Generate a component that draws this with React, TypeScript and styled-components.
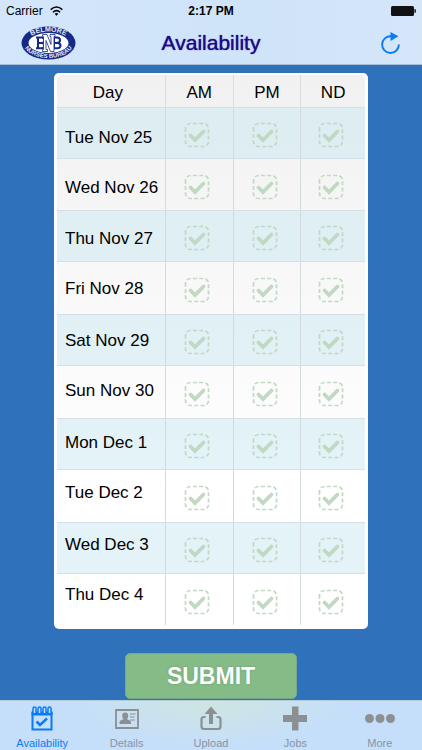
import React, { useState } from "react";
import styled, { createGlobalStyle } from "styled-components";

const GlobalStyle = createGlobalStyle`
  *, *::before, *::after { box-sizing: border-box; }
  body {
    margin: 0;
    background: #2f72bb;
    color: #000;
    font-family: "Liberation Sans", Arial, sans-serif;
  }
`;

const Screen = styled.div`
  display: flex;
  flex-direction: column;
  min-height: 100vh;
`;

const Header = styled.header`
  background: linear-gradient(90deg, #d3e6fb, #cfe3f9 60%, #d5e6f9);
  border-bottom: 1px solid #a5bfdb;
`;

const StatusBar = styled.div`
  display: grid;
  grid-template-columns: 1fr auto 1fr;
  align-items: center;
  height: 22px;
  padding: 0 6px;
  font-size: 12px;
  line-height: 22px;
`;

const Carrier = styled.span`
  display: flex;
  align-items: center;
  gap: 7px;
`;

const Clock = styled.span`
  font-weight: bold;
`;

const Battery = styled.svg`
  justify-self: end;
`;

const NavBar = styled.div`
  display: grid;
  grid-template-columns: 1fr auto 1fr;
  align-items: center;
  height: 42px;
  padding: 0 21px;
`;

const Title = styled.h1`
  margin: 0;
  color: #1d0a87;
  font-size: 21px;
  font-weight: normal;
  line-height: 42px;
  text-shadow: 0 0 1px #1d0a87;
`;

const RefreshButton = styled.button`
  display: flex;
  justify-self: end;
  padding: 0;
  border: 0;
  background: none;
`;

const Main = styled.main`
  display: flex;
  flex: 1;
  flex-direction: column;
  align-items: center;
  gap: 24px;
  padding: 8px 54px 1px;
`;

const Card = styled.section`
  width: 100%;
  padding: 2px 3px 4px;
  border-radius: 5px;
  background: #fff;
`;

const Grid = styled.table`
  width: 100%;
  table-layout: fixed;
  border-spacing: 0;
  border-radius: 5px;
  background: linear-gradient(#f1f1f1, #fff 75%);
`;

const HeadCell = styled.th<{ $width: number }>`
  width: ${(p) => p.$width}%;
  height: 32px;
  padding: 3px 0 0;
  font-size: 17px;
  font-weight: normal;
  line-height: 20px;
  & + & { border-left: 1px solid #d9dddf; }
  &:first-child { padding-right: 6px; }
`;

const DayRow = styled.tr`
  height: 52px;
  &:nth-child(8n + 2) { height: 51px; }
  &:nth-child(odd) > * {
    background: rgba(200, 232, 242, 0.5);
    border-top: 1px solid #d4e0e5;
    border-bottom: 1px solid #d4e0e5;
  }
`;

const DayCell = styled.th<{ $index: number }>`
  padding: ${(p) => 20 - p.$index}px 0 0 8px;
  font-size: 17px;
  font-weight: normal;
  line-height: 20px;
  text-align: left;
  vertical-align: top;
  white-space: nowrap;
`;

const ShiftCell = styled.td`
  padding: 4px 4px 0 0;
  border-left: 1px solid #d2dade;
`;

const Tick = styled.label`
  display: grid;
  justify-content: center;
  cursor: pointer;
  & > * { grid-area: 1 / 1; }
`;

const TickInput = styled.input`
  width: 26px;
  height: 26px;
  margin: 0;
  opacity: 0;
  &:checked + svg { color: #4f9a4d; }
`;

const TickArt = styled.svg`
  color: #c1d9c3;
  pointer-events: none;
`;

const Submit = styled.button`
  width: 55%;
  height: 46px;
  padding: 0;
  border: 1px solid #74a98c;
  border-radius: 5px;
  background: #85bb87;
  color: #fff;
  font-family: inherit;
  font-size: 23px;
  font-weight: bold;
  line-height: 44px;
  text-shadow: 0 0 2px rgba(50, 90, 50, 0.4);
`;

const TabBar = styled.nav`
  position: sticky;
  bottom: 0;
  display: grid;
  grid-template-columns: repeat(5, 1fr);
  height: 50px;
  border-top: 1px solid #b2cdd9;
  background:
    radial-gradient(ellipse 33% 90% at 50% 0, #cfe5e0, rgba(198, 224, 250, 0)),
    #c5dffa;
`;

const Tab = styled.a<{ $active?: boolean }>`
  display: flex;
  flex-direction: column;
  align-items: center;
  padding-top: 3px;
  color: ${(p) => (p.$active ? "#0a7bf7" : "#8d9093")};
  font-size: 11px;
  line-height: 12px;
  text-decoration: none;
`;

const TabIcon = styled.svg`
  margin-bottom: 4px;
`;

const TabLabel = styled.span<{ $active?: boolean }>`
  color: ${(p) => (p.$active ? "#0a7bf7" : "#8794a2")};
`;

const days = [
  "Tue Nov 25", "Wed Nov 26", "Thu Nov 27", "Fri Nov 28", "Sat Nov 29",
  "Sun Nov 30", "Mon Dec 1", "Tue Dec 2", "Wed Dec 3", "Thu Dec 4",
];
const shifts = ["AM", "PM", "ND"];
const columns = [
  { name: "Day", width: 35 },
  { name: "AM", width: 22 },
  { name: "PM", width: 22 },
  { name: "ND", width: 21 },
];

function Logo() {
  return (
    <svg width="55" height="34" viewBox="0 0 55 34" role="img" aria-label="Belmore Nurses Bureau">
      <defs>
        <path id="logo-top" d="M5.5 18 A22 12.500 0 0 1 49.5 18" />
        <path id="logo-bottom" d="M1.5 15 A26 17 0 0 0 53.5 15" />
      </defs>
      <ellipse cx="27.5" cy="17" rx="27" ry="16.5" fill="#142a86" />
      <ellipse cx="27.5" cy="17" rx="20" ry="10" fill="#fff" />
      <g fill="#e6edfb" fontFamily="Liberation Sans, sans-serif" fontWeight="bold">
        <text textAnchor="middle" fontSize="7"><textPath href="#logo-top" startOffset="50%">BELMORE</textPath></text>
        <text textAnchor="middle" fontSize="6"><textPath href="#logo-bottom" startOffset="50%">NURSES BUREAU</textPath></text>
      </g>
      <g fill="none" stroke="#142a86" strokeWidth="2">
        <path d="M15 11.500h5.500q3 0 3 2.700t-3 2.700h-3.500h3.500q3 0 3 2.700t-3 2.700h-5.500M17 11.500v11" />
        <path d="M32 11.500h4q3 0 3 2.700t-3 2.700h-3h3.500q3 0 3 2.700t-3 2.700h-4.500M33 11.500v11" />
      </g>
      <path
        d="M21.500 8.500h4.500l4 10v-8h-1v-2h5v2h-1v15h-3.500l-4.500-11v9h1.500v2h-5v-2h1v-13h-1z"
        fill="#fff" stroke="#142a86" strokeWidth="0.8"
      />
    </svg>
  );
}

function TickMark() {
  return (
    <TickArt width="26" height="26" viewBox="0 0 26 26" fill="none" stroke="currentColor" aria-hidden="true">
      <path
        d="M1.500 9V6.500a5 5 0 0 1 5-5h13a5 5 0 0 1 5 5v13a5 5 0 0 1-5 5h-13a5 5 0 0 1-5-5z"
        strokeWidth="1.700" strokeDasharray="4 2.300"
      />
      <path d="M6.500 13.500l4.500 4.500l8.500-8.500" strokeWidth="3.800" strokeLinecap="round" />
    </TickArt>
  );
}

const tabs = [
  {
    label: "Availability",
    art: (
      <>
        <path d="M5.500 8.500h19v17h-19z" fill="none" stroke="currentColor" strokeWidth="2" />
        <path d="M4.500 8h21v3.500h-21z" />
        <path
          d="M6 9V4.500q0-1.500 1.500-1.500t1.500 1.500V9M11 9V4.500q0-1.500 1.500-1.500t1.500 1.500V9M16 9V4.500q0-1.500 1.500-1.500t1.500 1.500V9M21 9V4.500q0-1.500 1.500-1.500t1.500 1.500V9"
          fill="#c5dffa" stroke="currentColor" strokeWidth="1.500"
        />
        <path d="M9.500 17.500l3.500 3.500l7-6.500" fill="none" stroke="currentColor" strokeWidth="2.500" />
      </>
    ),
  },
  {
    label: "Details",
    art: (
      <>
        <path d="M4 6h22v18H4z" fill="none" stroke="currentColor" strokeWidth="1.800" />
        <path d="M7.500 20v-2q0-1.300 1.500-1.800l2.500-1q-1.300-1.500-1.300-3.500q0-3.200 3-3.200t3 3.200q0 2-1.300 3.500l2.500 1q1.600.5 1.600 1.800v2z" />
        <path d="M18 10h5.500M18 13h4.500M18 16h5" stroke="currentColor" strokeWidth="1.200" />
      </>
    ),
  },
  {
    label: "Upload",
    art: (
      <>
        <path
          d="M9.500 13H8q-2.500 0-2.500 2.500v7q0 2.500 2.500 2.500h14q2.500 0 2.500-2.500v-7q0-2.500-2.500-2.500h-1.500"
          fill="none" stroke="currentColor" strokeWidth="2.200"
        />
        <path d="M15 2.500l6.500 7.500h-4.500v10h-4V10H8.500z" />
      </>
    ),
  },
  { label: "Jobs", art: <path d="M12 2.500h6.500v8.500H27v7h-8.500v8.500H12V18H3v-7h9z" /> },
  {
    label: "More",
    art: (
      <>
        <circle cx="4.500" cy="14.500" r="4.500" />
        <circle cx="15" cy="14.500" r="4.500" />
        <circle cx="25.500" cy="14.500" r="4.500" />
      </>
    ),
  },
];

export default function App() {
  const [picked, setPicked] = useState<Record<string, boolean>>({});

  return (
    <Screen>
      <GlobalStyle />
      <Header>
        <StatusBar>
          <Carrier>
            Carrier
            <svg width="13" height="10" viewBox="0 0 13 10" fill="none" stroke="#000" strokeWidth="1.500" aria-label="Wi-Fi">
              <path d="M.7 3.600Q6.500-1.600 12.300 3.600M2.900 6.200Q6.500 3 10.100 6.200" />
              <path d="M6.500 9.700L4.600 7.700Q6.500 6.300 8.400 7.700z" fill="#000" stroke="none" />
            </svg>
          </Carrier>
          <Clock>2:17 PM</Clock>
          <Battery width="25" height="10" viewBox="0 0 25 10" aria-label="Battery full">
            <rect width="23" height="10" rx="1.500" fill="#111" />
            <path d="M23.500 3h.5q1 0 1 2t-1 2h-.5z" fill="#111" />
          </Battery>
        </StatusBar>
        <NavBar>
          <Logo />
          <Title>Availability</Title>
          <RefreshButton aria-label="Refresh">
            <svg width="21" height="24" viewBox="0 0 21 24" fill="none">
              <path d="M11 5.200A8.400 8.400 0 1 0 18.900 13.500" stroke="#0a7bf7" strokeWidth="1.900" />
              <path d="M10.500 1l8 4.200l-8 4.800z" fill="#0a7bf7" />
            </svg>
          </RefreshButton>
        </NavBar>
      </Header>

      <Main>
        <Card>
          <Grid>
            <thead>
              <tr>
                {columns.map((c) => (
                  <HeadCell key={c.name} scope="col" $width={c.width}>{c.name}</HeadCell>
                ))}
              </tr>
            </thead>
            <tbody>
              {days.map((day, index) => (
                <DayRow key={day}>
                  <DayCell scope="row" $index={index}>{day}</DayCell>
                  {shifts.map((shift) => {
                    const key = `${day} ${shift}`;
                    return (
                      <ShiftCell key={shift}>
                        <Tick>
                          <TickInput
                            type="checkbox"
                            aria-label={key}
                            checked={!!picked[key]}
                            onChange={(e) => setPicked({ ...picked, [key]: e.target.checked })}
                          />
                          <TickMark />
                        </Tick>
                      </ShiftCell>
                    );
                  })}
                </DayRow>
              ))}
            </tbody>
          </Grid>
        </Card>
        <Submit type="submit">SUBMIT</Submit>
      </Main>

      <TabBar>
        {tabs.map((tab, i) => (
          <Tab key={tab.label} href={`#${tab.label.toLowerCase()}`} $active={i === 0}>
            <TabIcon width="30" height="29" viewBox="0 0 30 29" fill="currentColor" aria-hidden="true">
              {tab.art}
            </TabIcon>
            <TabLabel $active={i === 0}>{tab.label}</TabLabel>
          </Tab>
        ))}
      </TabBar>
    </Screen>
  );
}
